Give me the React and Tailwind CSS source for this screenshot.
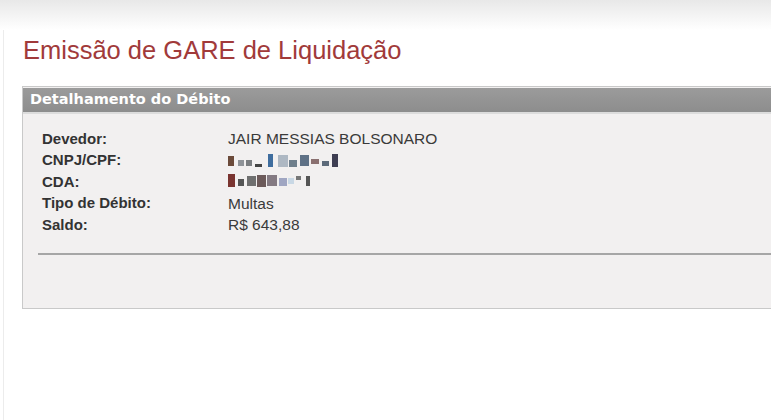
import React from "react";

const Blur = ({ blocks }) => (
  <span className="inline-flex items-center h-[14px]">
    {blocks.map((b, i) => (
      <span key={i} className={b} />
    ))}
  </span>
);

const cpf = [
  "w-[6px] h-[10px] bg-[#6b4a3a] mr-[4px]",
  "w-[6px] h-[6px] bg-[#8f9398] mt-[4px] mr-[2px]",
  "w-[6px] h-[6px] bg-[#7a7d80] mt-[4px] mr-[3px]",
  "w-[7px] h-[3px] bg-[#444] mt-[9px] mr-[6px]",
  "w-[5px] h-[13px] bg-[#3f6d9e] mr-[5px]",
  "w-[10px] h-[12px] bg-[#aeb8c3] mr-[1px]",
  "w-[8px] h-[7px] bg-[#6f7f8c] mt-[5px] mr-[3px]",
  "w-[9px] h-[11px] bg-[#5f7186] mr-[2px]",
  "w-[8px] h-[5px] bg-[#8a7070] mt-[2px] mr-[3px]",
  "w-[7px] h-[5px] bg-[#5d6a7a] mt-[6px] mr-[3px]",
  "w-[6px] h-[13px] bg-[#3e3e52]",
];

const cda = [
  "w-[7px] h-[13px] bg-[#7a3430] mr-[3px]",
  "w-[6px] h-[7px] bg-[#555] mt-[3px] mr-[3px]",
  "w-[9px] h-[10px] bg-[#6f6f6f] mr-[1px]",
  "w-[9px] h-[12px] bg-[#6c5a5a] mr-[1px]",
  "w-[10px] h-[11px] bg-[#847a82] mr-[2px]",
  "w-[8px] h-[8px] bg-[#a0a6c2] mt-[3px] mr-[1px]",
  "w-[6px] h-[6px] bg-[#c9d8e5] mr-[2px]",
  "w-[5px] h-[4px] bg-[#777] mb-[6px] mr-[5px]",
  "w-[4px] h-[10px] bg-[#555]",
];

const rows = [
  ["Devedor:", "JAIR MESSIAS BOLSONARO"],
  ["CNPJ/CPF:", <Blur blocks={cpf} />],
  ["CDA:", <Blur blocks={cda} />],
  ["Tipo de Débito:", "Multas"],
  ["Saldo:", "R$ 643,88"],
];

export default function App() {
  return (
    <div className="w-[771px] h-[420px] overflow-hidden bg-white font-['Liberation_Sans',Arial,sans-serif]">
      <div className="h-[30px] bg-gradient-to-b from-[#e8e8e8] to-white" />
      <div className="ml-[3px] border-l border-[#ececec] h-[390px] pl-[18px] pt-[5px]">
        <h1 className="text-[25.5px] leading-[30px] text-[#a13a3a] ml-[1px]">
          Emissão de GARE de Liquidação
        </h1>
        <div className="mt-[21px] border border-[#c9c9c9] border-r-0 bg-[#f2f0f0] pt-[1px] w-[760px]">
          <div className="h-[26px] bg-gradient-to-b from-[#9b9b9b] to-[#8d8d8d] border-b-2 border-[#dcdcdc] px-[7px] flex items-center">
            <span className="text-white font-bold text-[14.5px] font-['DejaVu_Sans',Verdana,sans-serif]">
              Detalhamento do Débito
            </span>
          </div>
          <div className="pl-[19px] pt-[14px] pb-[10px]">
            {rows.map(([label, value], i) => (
              <div key={i} className="flex h-[21.5px] items-center text-[15px] text-[#333]">
                <span className="w-[186px] font-bold">{label}</span>
                <span className="text-[15.5px] text-[#3a3a3a]">{value}</span>
              </div>
            ))}
          </div>
          <div className="ml-[15px] mt-[7px] border-t-2 border-[#a6a6a6]" />
          <div className="h-[53px]" />
        </div>
      </div>
    </div>
  );
}
